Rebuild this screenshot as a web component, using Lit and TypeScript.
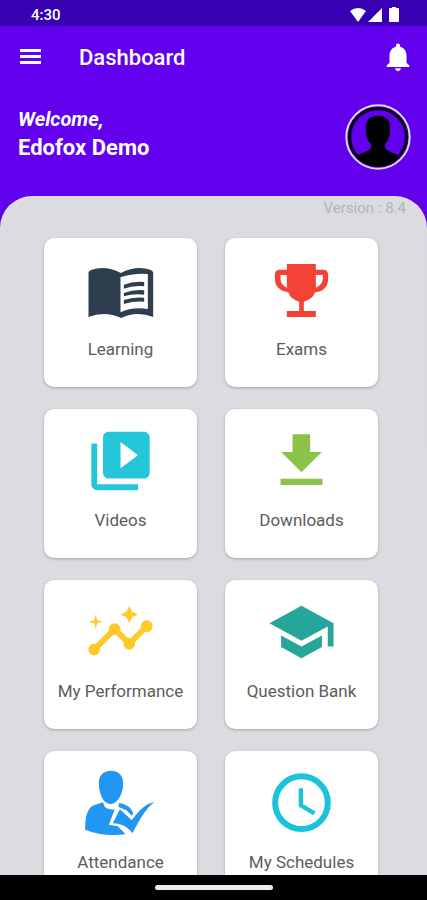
import { LitElement, html, css, svg, TemplateResult } from "lit";
import { customElement, property } from "lit/decorators.js";

interface Tile {
  label: string;
  color: string;
  viewBox: string;
  art: TemplateResult;
}

const tiles: Tile[] = [
  {
    label: "Learning",
    color: "#2f3e4e",
    viewBox: "166 90 210 210",
    art: svg`<path fill-rule="evenodd" d="M175 276V143Q176 137 184 134Q228 121 272 144Q317 121 360 134Q369 137 369 143V276Q319 256 273 279Q225 256 175 276Z
      M271 157V262Q308 244 353 252V147Q309 144 271 157Z"/>
      <path d="M281 179Q310 168 342 171V184Q310 180 281 191ZM281 204Q310 193 342 196V209Q310 205 281 214ZM281 225Q310 215 342 218V230Q310 228 281 237Z"/>`,
  },
  {
    label: "Exams",
    color: "#f44336",
    viewBox: "160 90 210 210",
    art: svg`<path fill-rule="evenodd" d="M221 117H308V134H330Q345 134 345 150V160Q345 198 306 202Q297 225 272 230V258H308V276H221V258H258V230Q234 225 225 202Q185 196 185 160V150Q185 134 201 134H221Z
      M221 150H202V163Q204 182 221 188ZM308 150V188Q326 182 329 163V150Z"/>`,
  },
  {
    label: "Videos",
    color: "#26c6da",
    viewBox: "0 0 24 24",
    art: svg`<path d="M4 6H2v14c0 1.100.9 2 2 2h14v-2H4V6zm16-4H8c-1.100 0-2 .9-2 2v12c0 1.100.9 2 2 2h12c1.100 0 2-.9 2-2V4c0-1.100-.9-2-2-2zm-8 12.500v-9l6 4.500-6 4.500z"/>`,
  },
  {
    label: "Downloads",
    color: "#8bc34a",
    viewBox: "160 78 210 210",
    art: svg`<path d="M238 103H291V156H326L265 217L204 156H238ZM202 236H328V255H202Z"/>`,
  },
  {
    label: "My Performance",
    color: "#ffc928",
    viewBox: "0 0 24 24",
    art: svg`<path d="M21 8c-1.450 0-2.260 1.440-1.930 2.510l-3.550 3.560c-.3-.09-.74-.09-1.040 0l-2.550-2.550C12.270 10.450 11.460 9 10 9c-1.450 0-2.270 1.440-1.930 2.520l-4.560 4.550C2.440 15.740 1 16.550 1 18c0 1.100.9 2 2 2 1.450 0 2.260-1.440 1.930-2.510l4.550-4.560c.3.09.74.09 1.040 0l2.550 2.550C12.730 16.550 13.540 18 15 18c1.450 0 2.270-1.440 1.930-2.520l3.560-3.550c1.070.33 2.510-.48 2.510-1.930 0-1.100-.9-2-2-2z"/>
      <path d="M15 9l.94-2.070L18 6l-2.060-.93L15 3l-.92 2.070L12 6l2.080.93zM3.500 11L4 9l2-.5L4 8l-.5-2L3 8l-2 .5L3 9z"/>`,
  },
  {
    label: "Question Bank",
    color: "#26a69a",
    viewBox: "0 0 24 24",
    art: svg`<path d="M5 13.180v4L12 21l7-3.820v-4L12 17l-7-3.820zM12 3L1 9l11 6 9-4.910V17h2V9L12 3z"/>`,
  },
  {
    label: "Attendance",
    color: "#2196f3",
    viewBox: "166 84 210 210",
    art: svg`<path d="M240 92C264 92 279 106 279 128C280 158 264 191 241 192C220 190 206 164 206 128C206 107 218 94 240 92Z"/>
      <path d="M219 187C221 204 235 211 254 208L236 254L263 259L286 283Q218 291 165 269C165 233 169 202 195 194Z"/>
      <path d="M267 189C287 191 304 204 309 219L305 228L289 211L265 201Z"/>
      <path d="M269 208L305 241C325 213 346 191 372 186C345 208 325 244 307 280C293 262 276 251 248 250Z"/>`,
  },
  {
    label: "My Schedules",
    color: "#1bc3d8",
    viewBox: "160 84 210 210",
    art: svg`<circle cx="265" cy="188" r="79" fill="none" stroke="currentColor" stroke-width="18"/>
      <path d="M263 145V196L304 220" fill="none" stroke="currentColor" stroke-width="13"/>`,
  },
];

@customElement("dashboard-tile")
class DashboardTile extends LitElement {
  @property({ attribute: false }) tile!: Tile;

  static styles = css`
    :host {
      display: block;
    }
    .tile {
      display: flex;
      flex-direction: column;
      align-items: center;
      width: 100%;
      height: 149px;
      padding: 17px 0 0;
      border: 0;
      border-radius: 10px;
      background: #fff;
      box-shadow: 0 1px 3px rgba(0, 0, 0, 0.26);
      font: 400 17px/24px Roboto, sans-serif;
      color: #5c5c5c;
      cursor: pointer;
    }
    .icon {
      display: block;
      width: 71px;
      height: 70px;
      margin-bottom: 12px;
      fill: currentColor;
    }
    .label {
      white-space: nowrap;
    }
  `;

  render() {
    const { label, color, viewBox, art } = this.tile;
    return html`<button class="tile" type="button">
      <svg class="icon" viewBox=${viewBox} style="color:${color}" aria-hidden="true">${art}</svg>
      <span class="label">${label}</span>
    </button>`;
  }
}

@customElement("app-root")
class AppRoot extends LitElement {
  static styles = css`
    :host {
      display: flex;
      flex-direction: column;
      height: 100vh;
      overflow: hidden;
      background: #6200ee;
      color: #fff;
      font-family: Roboto, sans-serif;
    }
    .status {
      display: flex;
      align-items: center;
      justify-content: space-between;
      flex: none;
      height: 26px;
      padding: 3px 28px 0 31px;
      box-sizing: border-box;
      background: #3700b3;
      font-size: 15px;
      line-height: 24px;
      font-weight: 500;
    }
    .signals {
      display: block;
      width: 50px;
      height: 16px;
      fill: #fff;
    }
    .bar {
      display: flex;
      align-items: center;
      flex: none;
      height: 62px;
      padding: 0 12px 0 15px;
    }
    .action {
      display: block;
      padding: 0;
      border: 0;
      background: none;
      color: inherit;
      cursor: pointer;
    }
    .glyph {
      display: block;
      fill: currentColor;
    }
    .menu {
      width: 32px;
      height: 32px;
    }
    .bell {
      width: 34px;
      height: 34px;
    }
    .title {
      flex: 1;
      margin: 0 0 0 32px;
      padding-top: 2px;
      font-size: 22px;
      line-height: 30px;
      font-weight: 500;
    }
    .profile {
      display: flex;
      justify-content: space-between;
      flex: none;
      height: 108px;
      padding: 16px 16px 0 18px;
      box-sizing: border-box;
    }
    .greeting {
      padding-top: 2px;
    }
    .welcome,
    .name {
      margin: 0;
      font-weight: 700;
    }
    .welcome {
      font-size: 20px;
      line-height: 26px;
      font-style: italic;
    }
    .name {
      font-size: 22px;
      line-height: 32px;
    }
    .avatar {
      display: block;
      width: 66px;
      height: 66px;
    }
    .panel {
      flex: 1;
      min-height: 0;
      overflow-y: auto;
      scrollbar-width: none;
      border-radius: 32px 32px 0 0;
      background: #dcdbe0;
    }
    .version {
      margin: 0;
      padding: 0 21px 18px;
      text-align: right;
      color: #b4b3b8;
      font-size: 15px;
      line-height: 24px;
    }
    .grid {
      display: grid;
      grid-template-columns: 1fr 1fr;
      gap: 22px 28px;
      padding: 0 49px 22px 44px;
    }
    .navbar {
      display: flex;
      align-items: center;
      justify-content: center;
      flex: none;
      height: 25px;
      background: #000;
    }
    .pill {
      width: 118px;
      height: 5px;
      border-radius: 3px;
      background: #ececec;
    }
  `;

  render() {
    return html`
      <div class="status">
        <span>4:30</span>
        <svg class="signals" viewBox="0 0 50 16" aria-hidden="true">
          <path d="M1 4Q9-2 17 4L9 15ZM33 1V15H19ZM43 0h4v1h2q1 0 1 1v12q0 1-1 1h-8q-1 0-1-1V2q0-1 1-1h2Z" />
        </svg>
      </div>
      <header class="bar">
        <button class="action" type="button" aria-label="Open menu">
          <svg class="glyph menu" viewBox="0 0 32 32">
            <path d="M5 8h21v3H5zM5 14h21v3H5zM5 20h21v3H5z" />
          </svg>
        </button>
        <h1 class="title">Dashboard</h1>
        <button class="action" type="button" aria-label="Notifications">
          <svg class="glyph bell" viewBox="0 0 24 24">
            <path d="M12 22c1.100 0 2-.9 2-2h-4c0 1.100.9 2 2 2zm6-6v-5c0-3.070-1.640-5.640-4.500-6.320V4c0-.83-.67-1.500-1.500-1.500s-1.500.67-1.500 1.500v.68C7.630 5.360 6 7.920 6 11v5l-2 2v1h16v-1l-2-2z" />
          </svg>
        </button>
      </header>
      <section class="profile">
        <div class="greeting">
          <p class="welcome">Welcome,</p>
          <p class="name">Edofox Demo</p>
        </div>
        <svg class="avatar" viewBox="0 0 198 198" role="img" aria-label="Profile picture">
          <circle cx="99" cy="99" r="95" fill="#3f0799" stroke="#e4d5ff" stroke-width="6" />
          <circle cx="99" cy="99" r="85" fill="#6200ee" stroke="#08001c" stroke-width="9" />
          <path d="M99 35C122 35 136 47 135 67L134 95C131 106 126 115 120 120V130C124 143 145 146 160 154Q135 187 99 187Q61 186 38 154C53 146 74 143 78 130V120C72 115 67 106 64 95L63 67C63 47 76 35 99 35Z" />
        </svg>
      </section>
      <main class="panel">
        <p class="version">Version : 8.4</p>
        <div class="grid">
          ${tiles.map((tile) => html`<dashboard-tile .tile=${tile}></dashboard-tile>`)}
        </div>
      </main>
      <div class="navbar"><div class="pill"></div></div>
    `;
  }
}
